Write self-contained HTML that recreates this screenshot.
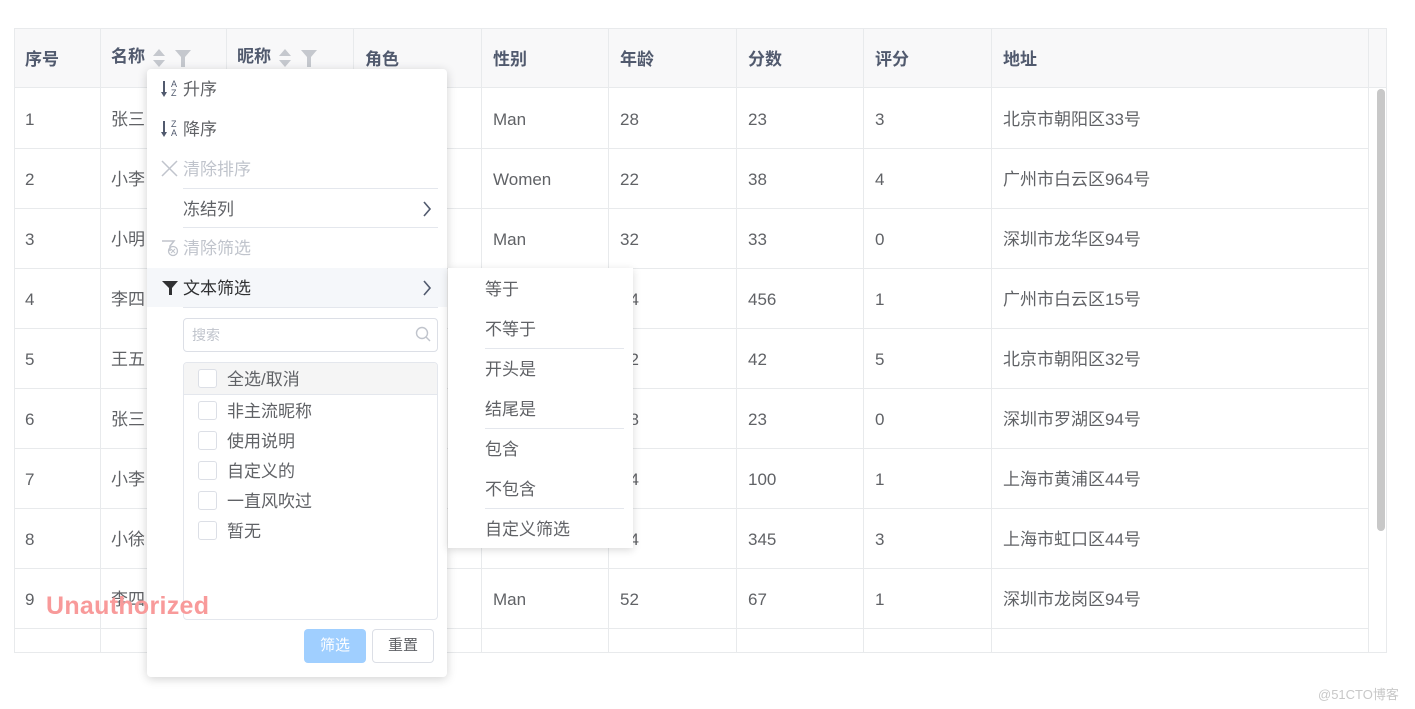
<!DOCTYPE html>
<html><head><meta charset="utf-8"><style>
*{box-sizing:border-box;margin:0;padding:0}
body{width:1415px;height:709px;background:#fff;font-family:"Liberation Sans","Noto Sans CJK SC",sans-serif;font-size:17px;color:#606266;position:relative;overflow:hidden}
.a{position:absolute}
.tbl{left:14px;top:28px;width:1373px;height:625px;border:1px solid #e8eaec;overflow:hidden}
.hdr{left:0;top:0;width:1371px;height:59px;background:#f8f8f9;border-bottom:1px solid #e8eaec}
.vl{top:0;width:1px;height:625px;background:#e8eaec}
.hl{left:0;width:1354px;height:1px;background:#e8eaec}
.c{line-height:20px;white-space:nowrap}
.h{font-weight:bold;color:#515a6e}
.pop{left:147px;top:69px;width:300px;height:608px;background:#fff;border-radius:4px;box-shadow:0 2px 10px rgba(0,0,0,.18)}
.mi{left:36px;line-height:20px}
.dis{color:#c0c4cc}
.dv{height:1px;background:#e4e7ed}
.sub{left:448px;top:268px;width:185px;height:280px;background:#fff;box-shadow:0 2px 8px rgba(0,0,0,.15)}
.si{left:37px;line-height:20px}
.cb{width:19px;height:19px;border:1px solid #dcdfe6;border-radius:3px;background:#fff}
</style></head><body>
<div class="a tbl">
<div class="a hdr"></div>
<div class="a hl" style="top:119px"></div><div class="a hl" style="top:179px"></div><div class="a hl" style="top:239px"></div><div class="a hl" style="top:299px"></div><div class="a hl" style="top:359px"></div><div class="a hl" style="top:419px"></div><div class="a hl" style="top:479px"></div><div class="a hl" style="top:539px"></div><div class="a hl" style="top:599px"></div>
<div class="a vl" style="left:85px"></div><div class="a vl" style="left:211px"></div><div class="a vl" style="left:338px"></div><div class="a vl" style="left:466px"></div><div class="a vl" style="left:593px"></div><div class="a vl" style="left:721px"></div><div class="a vl" style="left:848px"></div><div class="a vl" style="left:976px"></div><div class="a vl" style="left:1353px"></div>
<div class="a" style="left:1362px;top:60px;width:8px;height:442px;background:#c8c8c8;border-radius:4px"></div>
</div>
<div class="a c h" style="left:25px;top:50px">序号</div>
<div class="a c h" style="left:111px;top:47px">名称</div>
<svg class="a" style="left:151px;top:48px" width="40" height="20"><path d="M2 8L8 1L14 8Z M2 12L8 19L14 12Z" fill="#c5c8ce"/><path d="M24 2H40L34 9V19L30 19V9Z" fill="#c5c8ce"/></svg>
<div class="a c h" style="left:237px;top:47px">昵称</div>
<svg class="a" style="left:277px;top:48px" width="40" height="20"><path d="M2 8L8 1L14 8Z M2 12L8 19L14 12Z" fill="#c5c8ce"/><path d="M24 2H40L34 9V19L30 19V9Z" fill="#c5c8ce"/></svg>
<div class="a c h" style="left:365px;top:50px">角色</div>
<div class="a c h" style="left:493px;top:50px">性别</div>
<div class="a c h" style="left:620px;top:50px">年龄</div>
<div class="a c h" style="left:748px;top:50px">分数</div>
<div class="a c h" style="left:875px;top:50px">评分</div>
<div class="a c h" style="left:1003px;top:50px">地址</div>
<div class="a c" style="left:25px;top:110px">1</div><div class="a c" style="left:111px;top:110px">张三</div><div class="a c" style="left:493px;top:110px">Man</div><div class="a c" style="left:620px;top:110px">28</div><div class="a c" style="left:748px;top:110px">23</div><div class="a c" style="left:875px;top:110px">3</div><div class="a c" style="left:1003px;top:110px">北京市朝阳区33号</div>
<div class="a c" style="left:25px;top:170px">2</div><div class="a c" style="left:111px;top:170px">小李</div><div class="a c" style="left:493px;top:170px">Women</div><div class="a c" style="left:620px;top:170px">22</div><div class="a c" style="left:748px;top:170px">38</div><div class="a c" style="left:875px;top:170px">4</div><div class="a c" style="left:1003px;top:170px">广州市白云区964号</div>
<div class="a c" style="left:25px;top:230px">3</div><div class="a c" style="left:111px;top:230px">小明</div><div class="a c" style="left:493px;top:230px">Man</div><div class="a c" style="left:620px;top:230px">32</div><div class="a c" style="left:748px;top:230px">33</div><div class="a c" style="left:875px;top:230px">0</div><div class="a c" style="left:1003px;top:230px">深圳市龙华区94号</div>
<div class="a c" style="left:25px;top:290px">4</div><div class="a c" style="left:111px;top:290px">李四</div><div class="a c" style="left:620px;top:290px">24</div><div class="a c" style="left:748px;top:290px">456</div><div class="a c" style="left:875px;top:290px">1</div><div class="a c" style="left:1003px;top:290px">广州市白云区15号</div>
<div class="a c" style="left:25px;top:350px">5</div><div class="a c" style="left:111px;top:350px">王五</div><div class="a c" style="left:620px;top:350px">22</div><div class="a c" style="left:748px;top:350px">42</div><div class="a c" style="left:875px;top:350px">5</div><div class="a c" style="left:1003px;top:350px">北京市朝阳区32号</div>
<div class="a c" style="left:25px;top:410px">6</div><div class="a c" style="left:111px;top:410px">张三</div><div class="a c" style="left:620px;top:410px">18</div><div class="a c" style="left:748px;top:410px">23</div><div class="a c" style="left:875px;top:410px">0</div><div class="a c" style="left:1003px;top:410px">深圳市罗湖区94号</div>
<div class="a c" style="left:25px;top:470px">7</div><div class="a c" style="left:111px;top:470px">小李</div><div class="a c" style="left:620px;top:470px">34</div><div class="a c" style="left:748px;top:470px">100</div><div class="a c" style="left:875px;top:470px">1</div><div class="a c" style="left:1003px;top:470px">上海市黄浦区44号</div>
<div class="a c" style="left:25px;top:530px">8</div><div class="a c" style="left:111px;top:530px">小徐</div><div class="a c" style="left:620px;top:530px">34</div><div class="a c" style="left:748px;top:530px">345</div><div class="a c" style="left:875px;top:530px">3</div><div class="a c" style="left:1003px;top:530px">上海市虹口区44号</div>
<div class="a c" style="left:25px;top:590px">9</div><div class="a c" style="left:111px;top:590px">李四</div><div class="a c" style="left:493px;top:590px">Man</div><div class="a c" style="left:620px;top:590px">52</div><div class="a c" style="left:748px;top:590px">67</div><div class="a c" style="left:875px;top:590px">1</div><div class="a c" style="left:1003px;top:590px">深圳市龙岗区94号</div>

<div class="a pop">
<div class="a" style="left:0;top:199px;width:300px;height:39px;background:#f5f7fa"></div>
<svg class="a" style="left:14px;top:11px" width="8" height="18"><path d="M3 1V15" stroke="#515a6e" stroke-width="2"/><path d="M0 12L3 17L6 12Z" fill="#515a6e"/></svg>
<div class="a" style="left:24px;top:11px;font-size:9px;line-height:9px;color:#515a6e">A<br>Z</div>
<div class="a mi" style="top:11px">升序</div>
<svg class="a" style="left:14px;top:51px" width="8" height="18"><path d="M3 1V15" stroke="#515a6e" stroke-width="2"/><path d="M0 12L3 17L6 12Z" fill="#515a6e"/></svg>
<div class="a" style="left:24px;top:51px;font-size:9px;line-height:9px;color:#515a6e">Z<br>A</div>
<div class="a mi" style="top:51px">降序</div>
<svg class="a" style="left:14px;top:91px" width="17" height="17"><path d="M1 1L16 16M16 1L1 16" stroke="#c0c4cc" stroke-width="1.5"/></svg>
<div class="a mi dis" style="top:91px">清除排序</div>
<div class="a dv" style="left:36px;top:119px;width:255px"></div>
<div class="a mi" style="top:131px">冻结列</div>
<svg class="a" style="left:275px;top:131px" width="10" height="18"><path d="M2 2L8 9L2 16" stroke="#515a6e" stroke-width="1.6" fill="none"/></svg>
<div class="a dv" style="left:36px;top:158px;width:255px"></div>
<svg class="a" style="left:14px;top:170px" width="18" height="18"><path d="M1 2H13L9 7V12" stroke="#c0c4cc" stroke-width="1.5" fill="none"/><circle cx="12" cy="12" r="4.5" stroke="#c0c4cc" stroke-width="1.3" fill="none"/><path d="M10 10L14 14M14 10L10 14" stroke="#c0c4cc"/></svg>
<div class="a mi dis" style="top:170px">清除筛选</div>
<svg class="a" style="left:15px;top:211px" width="16" height="16"><path d="M0 1H16L10 8V15H7V8Z" fill="#303133"/></svg>
<div class="a mi" style="top:210px;color:#303133">文本筛选</div>
<svg class="a" style="left:275px;top:210px" width="10" height="18"><path d="M2 2L8 9L2 16" stroke="#515a6e" stroke-width="1.6" fill="none"/></svg>
<div class="a dv" style="left:36px;top:238px;width:255px"></div>
<div class="a" style="left:36px;top:249px;width:255px;height:34px;border:1px solid #dcdfe6;border-radius:4px"></div>
<div class="a" style="left:45px;top:257px;font-size:14px;line-height:18px;color:#c0c4cc">搜索</div>
<svg class="a" style="left:268px;top:257px" width="16" height="16"><circle cx="7" cy="7" r="5.5" stroke="#c0c4cc" stroke-width="1.4" fill="none"/><path d="M11 11L15 15" stroke="#c0c4cc" stroke-width="1.4"/></svg>
<div class="a" style="left:36px;top:293px;width:255px;height:258px;border:1px solid #e4e7ed;border-radius:4px;overflow:hidden">
<div class="a" style="left:0;top:0;width:255px;height:32px;background:#f5f5f5;border-bottom:1px solid #e4e7ed"></div>
<div class="a cb" style="left:14px;top:6px"></div><div class="a c" style="left:43px;top:7px">全选/取消</div>
<div class="a cb" style="left:14px;top:38px"></div><div class="a c" style="left:43px;top:39px">非主流昵称</div>
<div class="a cb" style="left:14px;top:68px"></div><div class="a c" style="left:43px;top:69px">使用说明</div>
<div class="a cb" style="left:14px;top:98px"></div><div class="a c" style="left:43px;top:99px">自定义的</div>
<div class="a cb" style="left:14px;top:128px"></div><div class="a c" style="left:43px;top:129px">一直风吹过</div>
<div class="a cb" style="left:14px;top:158px"></div><div class="a c" style="left:43px;top:159px">暂无</div>
</div>
<div class="a" style="left:157px;top:560px;width:62px;height:34px;background:#a0cfff;border-radius:4px;color:#fff;font-size:15px;line-height:34px;text-align:center">筛选</div>
<div class="a" style="left:225px;top:560px;width:62px;height:34px;border:1px solid #dcdfe6;border-radius:4px;color:#606266;font-size:15px;line-height:32px;text-align:center">重置</div>
</div>

<div class="a sub">
<div class="a si" style="top:12px">等于</div>
<div class="a si" style="top:52px">不等于</div>
<div class="a dv" style="left:37px;top:80px;width:139px"></div>
<div class="a si" style="top:92px">开头是</div>
<div class="a si" style="top:132px">结尾是</div>
<div class="a dv" style="left:37px;top:160px;width:139px"></div>
<div class="a si" style="top:172px">包含</div>
<div class="a si" style="top:212px">不包含</div>
<div class="a dv" style="left:37px;top:240px;width:139px"></div>
<div class="a si" style="top:252px">自定义筛选</div>
</div>

<div class="a" style="left:46px;top:591px;font-size:25px;font-weight:bold;color:#f89a9a;line-height:30px;letter-spacing:0.3px">Unauthorized</div>
<div class="a" style="left:1318px;top:684px;font-size:13px;color:#c8c8c8">@51CTO博客</div>
</body></html>
